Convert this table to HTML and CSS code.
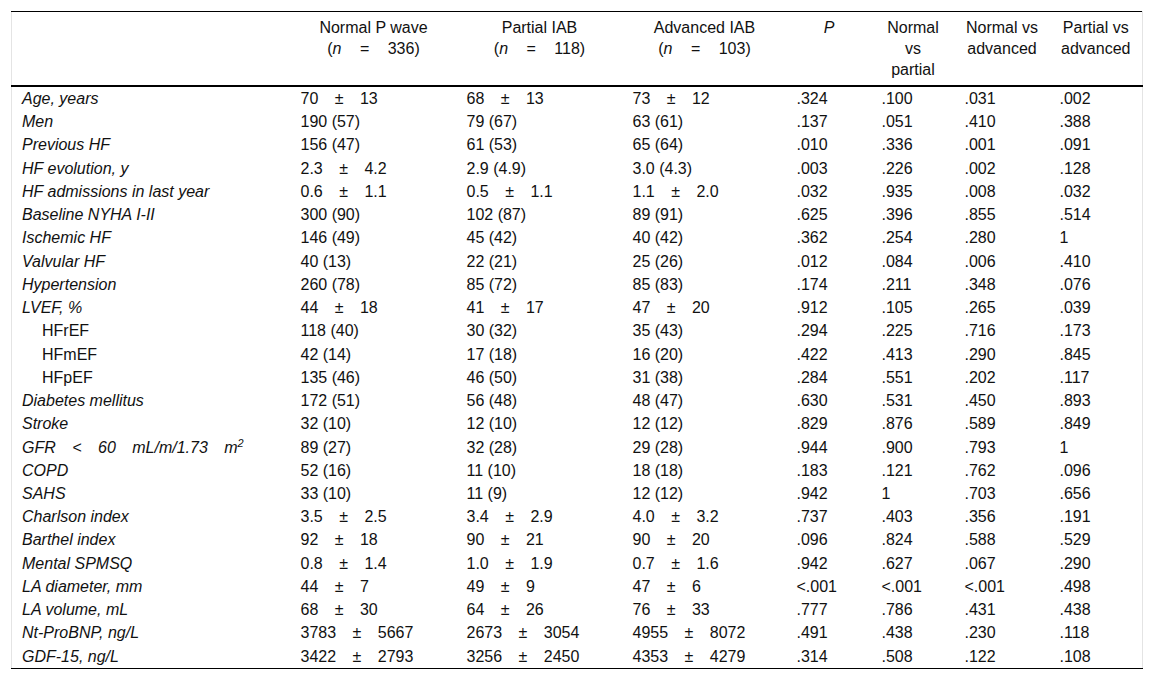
FILE: index.html
```html
<!DOCTYPE html>
<html lang="en">
<head>
<meta charset="utf-8">
<title>Table</title>
<link rel="stylesheet" href="styles.css">
</head>
<body>
<div class="wrap">
<table class="tbl">
<colgroup>
<col class="c-label"><col class="c-grp"><col class="c-grp"><col class="c-grp2"><col class="c-p"><col class="c-np"><col class="c-na"><col class="c-pa">
</colgroup>
<thead>
<tr>
<th></th>
<th>Normal P wave<br><span class="wh">(<i>n</i> = 336)</span></th>
<th>Partial IAB<br><span class="wh">(<i>n</i> = 118)</span></th>
<th>Advanced IAB<br><span class="wh">(<i>n</i> = 103)</span></th>
<th><i>P</i></th>
<th>Normal<br>vs<br>partial</th>
<th>Normal vs<br>advanced</th>
<th>Partial vs<br>advanced</th>
</tr>
</thead>
<tbody>
<tr><td class="lab">Age, years</td><td class="w">70 ± 13</td><td class="w">68 ± 13</td><td class="w">73 ± 12</td><td>.324</td><td>.100</td><td>.031</td><td>.002</td></tr>
<tr><td class="lab">Men</td><td>190 (57)</td><td>79 (67)</td><td>63 (61)</td><td>.137</td><td>.051</td><td>.410</td><td>.388</td></tr>
<tr><td class="lab">Previous HF</td><td>156 (47)</td><td>61 (53)</td><td>65 (64)</td><td>.010</td><td>.336</td><td>.001</td><td>.091</td></tr>
<tr><td class="lab">HF evolution, y</td><td class="w">2.3 ± 4.2</td><td>2.9 (4.9)</td><td>3.0 (4.3)</td><td>.003</td><td>.226</td><td>.002</td><td>.128</td></tr>
<tr><td class="lab">HF admissions in last year</td><td class="w">0.6 ± 1.1</td><td class="w">0.5 ± 1.1</td><td class="w">1.1 ± 2.0</td><td>.032</td><td>.935</td><td>.008</td><td>.032</td></tr>
<tr><td class="lab">Baseline NYHA I-II</td><td>300 (90)</td><td>102 (87)</td><td>89 (91)</td><td>.625</td><td>.396</td><td>.855</td><td>.514</td></tr>
<tr><td class="lab">Ischemic HF</td><td>146 (49)</td><td>45 (42)</td><td>40 (42)</td><td>.362</td><td>.254</td><td>.280</td><td>1</td></tr>
<tr><td class="lab">Valvular HF</td><td>40 (13)</td><td>22 (21)</td><td>25 (26)</td><td>.012</td><td>.084</td><td>.006</td><td>.410</td></tr>
<tr><td class="lab">Hypertension</td><td>260 (78)</td><td>85 (72)</td><td>85 (83)</td><td>.174</td><td>.211</td><td>.348</td><td>.076</td></tr>
<tr><td class="lab">LVEF, %</td><td class="w">44 ± 18</td><td class="w">41 ± 17</td><td class="w">47 ± 20</td><td>.912</td><td>.105</td><td>.265</td><td>.039</td></tr>
<tr><td class="sub">HFrEF</td><td>118 (40)</td><td>30 (32)</td><td>35 (43)</td><td>.294</td><td>.225</td><td>.716</td><td>.173</td></tr>
<tr><td class="sub">HFmEF</td><td>42 (14)</td><td>17 (18)</td><td>16 (20)</td><td>.422</td><td>.413</td><td>.290</td><td>.845</td></tr>
<tr><td class="sub">HFpEF</td><td>135 (46)</td><td>46 (50)</td><td>31 (38)</td><td>.284</td><td>.551</td><td>.202</td><td>.117</td></tr>
<tr><td class="lab">Diabetes mellitus</td><td>172 (51)</td><td>56 (48)</td><td>48 (47)</td><td>.630</td><td>.531</td><td>.450</td><td>.893</td></tr>
<tr><td class="lab">Stroke</td><td>32 (10)</td><td>12 (10)</td><td>12 (12)</td><td>.829</td><td>.876</td><td>.589</td><td>.849</td></tr>
<tr><td class="lab w">GFR &lt; 60 mL/m/1.73 m<sup>2</sup></td><td>89 (27)</td><td>32 (28)</td><td>29 (28)</td><td>.944</td><td>.900</td><td>.793</td><td>1</td></tr>
<tr><td class="lab">COPD</td><td>52 (16)</td><td>11 (10)</td><td>18 (18)</td><td>.183</td><td>.121</td><td>.762</td><td>.096</td></tr>
<tr><td class="lab">SAHS</td><td>33 (10)</td><td>11 (9)</td><td>12 (12)</td><td>.942</td><td>1</td><td>.703</td><td>.656</td></tr>
<tr><td class="lab">Charlson index</td><td class="w">3.5 ± 2.5</td><td class="w">3.4 ± 2.9</td><td class="w">4.0 ± 3.2</td><td>.737</td><td>.403</td><td>.356</td><td>.191</td></tr>
<tr><td class="lab">Barthel index</td><td class="w">92 ± 18</td><td class="w">90 ± 21</td><td class="w">90 ± 20</td><td>.096</td><td>.824</td><td>.588</td><td>.529</td></tr>
<tr><td class="lab">Mental SPMSQ</td><td class="w">0.8 ± 1.4</td><td class="w">1.0 ± 1.9</td><td class="w">0.7 ± 1.6</td><td>.942</td><td>.627</td><td>.067</td><td>.290</td></tr>
<tr><td class="lab">LA diameter, mm</td><td class="w">44 ± 7</td><td class="w">49 ± 9</td><td class="w">47 ± 6</td><td>&lt;.001</td><td>&lt;.001</td><td>&lt;.001</td><td>.498</td></tr>
<tr><td class="lab">LA volume, mL</td><td class="w">68 ± 30</td><td class="w">64 ± 26</td><td class="w">76 ± 33</td><td>.777</td><td>.786</td><td>.431</td><td>.438</td></tr>
<tr><td class="lab">Nt-ProBNP, ng/L</td><td class="w">3783 ± 5667</td><td class="w">2673 ± 3054</td><td class="w">4955 ± 8072</td><td>.491</td><td>.438</td><td>.230</td><td>.118</td></tr>
<tr><td class="lab">GDF-15, ng/L</td><td class="w">3422 ± 2793</td><td class="w">3256 ± 2450</td><td class="w">4353 ± 4279</td><td>.314</td><td>.508</td><td>.122</td><td>.108</td></tr>
</tbody>
</table>
</div>
</body>
</html>
```

FILE: styles.css
```css
html, body {
  margin: 0;
  padding: 0;
  background: #fff;
}

.wrap {
  padding: 11px 10px 0 11px;
}

.tbl {
  width: 1131px;
  table-layout: fixed;
  border-collapse: collapse;
  font-family: "Liberation Sans", Arial, sans-serif;
  font-size: 16px;
  color: #111;
  border-left: 1px solid #e4e4e4;
  border-right: 1px solid #e4e4e4;
  border-top: 1px solid #000;
  border-bottom: 1px solid #000;
}

.c-label { width: 279px; }
.c-grp { width: 166px; }
.c-grp2 { width: 164px; }
.c-p { width: 85px; }
.c-np { width: 83px; }
.c-na { width: 95px; }
.c-pa { width: 93px; }

.tbl th {
  font-weight: normal;
  text-align: center;
  vertical-align: top;
  line-height: 21px;
  padding: 5px 4px 5px;
  border-bottom: 2px solid #000;
}

.tbl td {
  padding: 0 10px;
  line-height: 23.24px;
  height: 23.24px;
  text-align: left;
  vertical-align: middle;
  white-space: nowrap;
}

.tbl td.lab {
  font-style: italic;
}

.tbl td.sub {
  padding-left: 30px;
}

.w {
  word-spacing: 12px;
}

.wh {
  word-spacing: 14px;
}

sup {
  font-size: 11px;
  line-height: 0;
  vertical-align: 6px;
}
```
